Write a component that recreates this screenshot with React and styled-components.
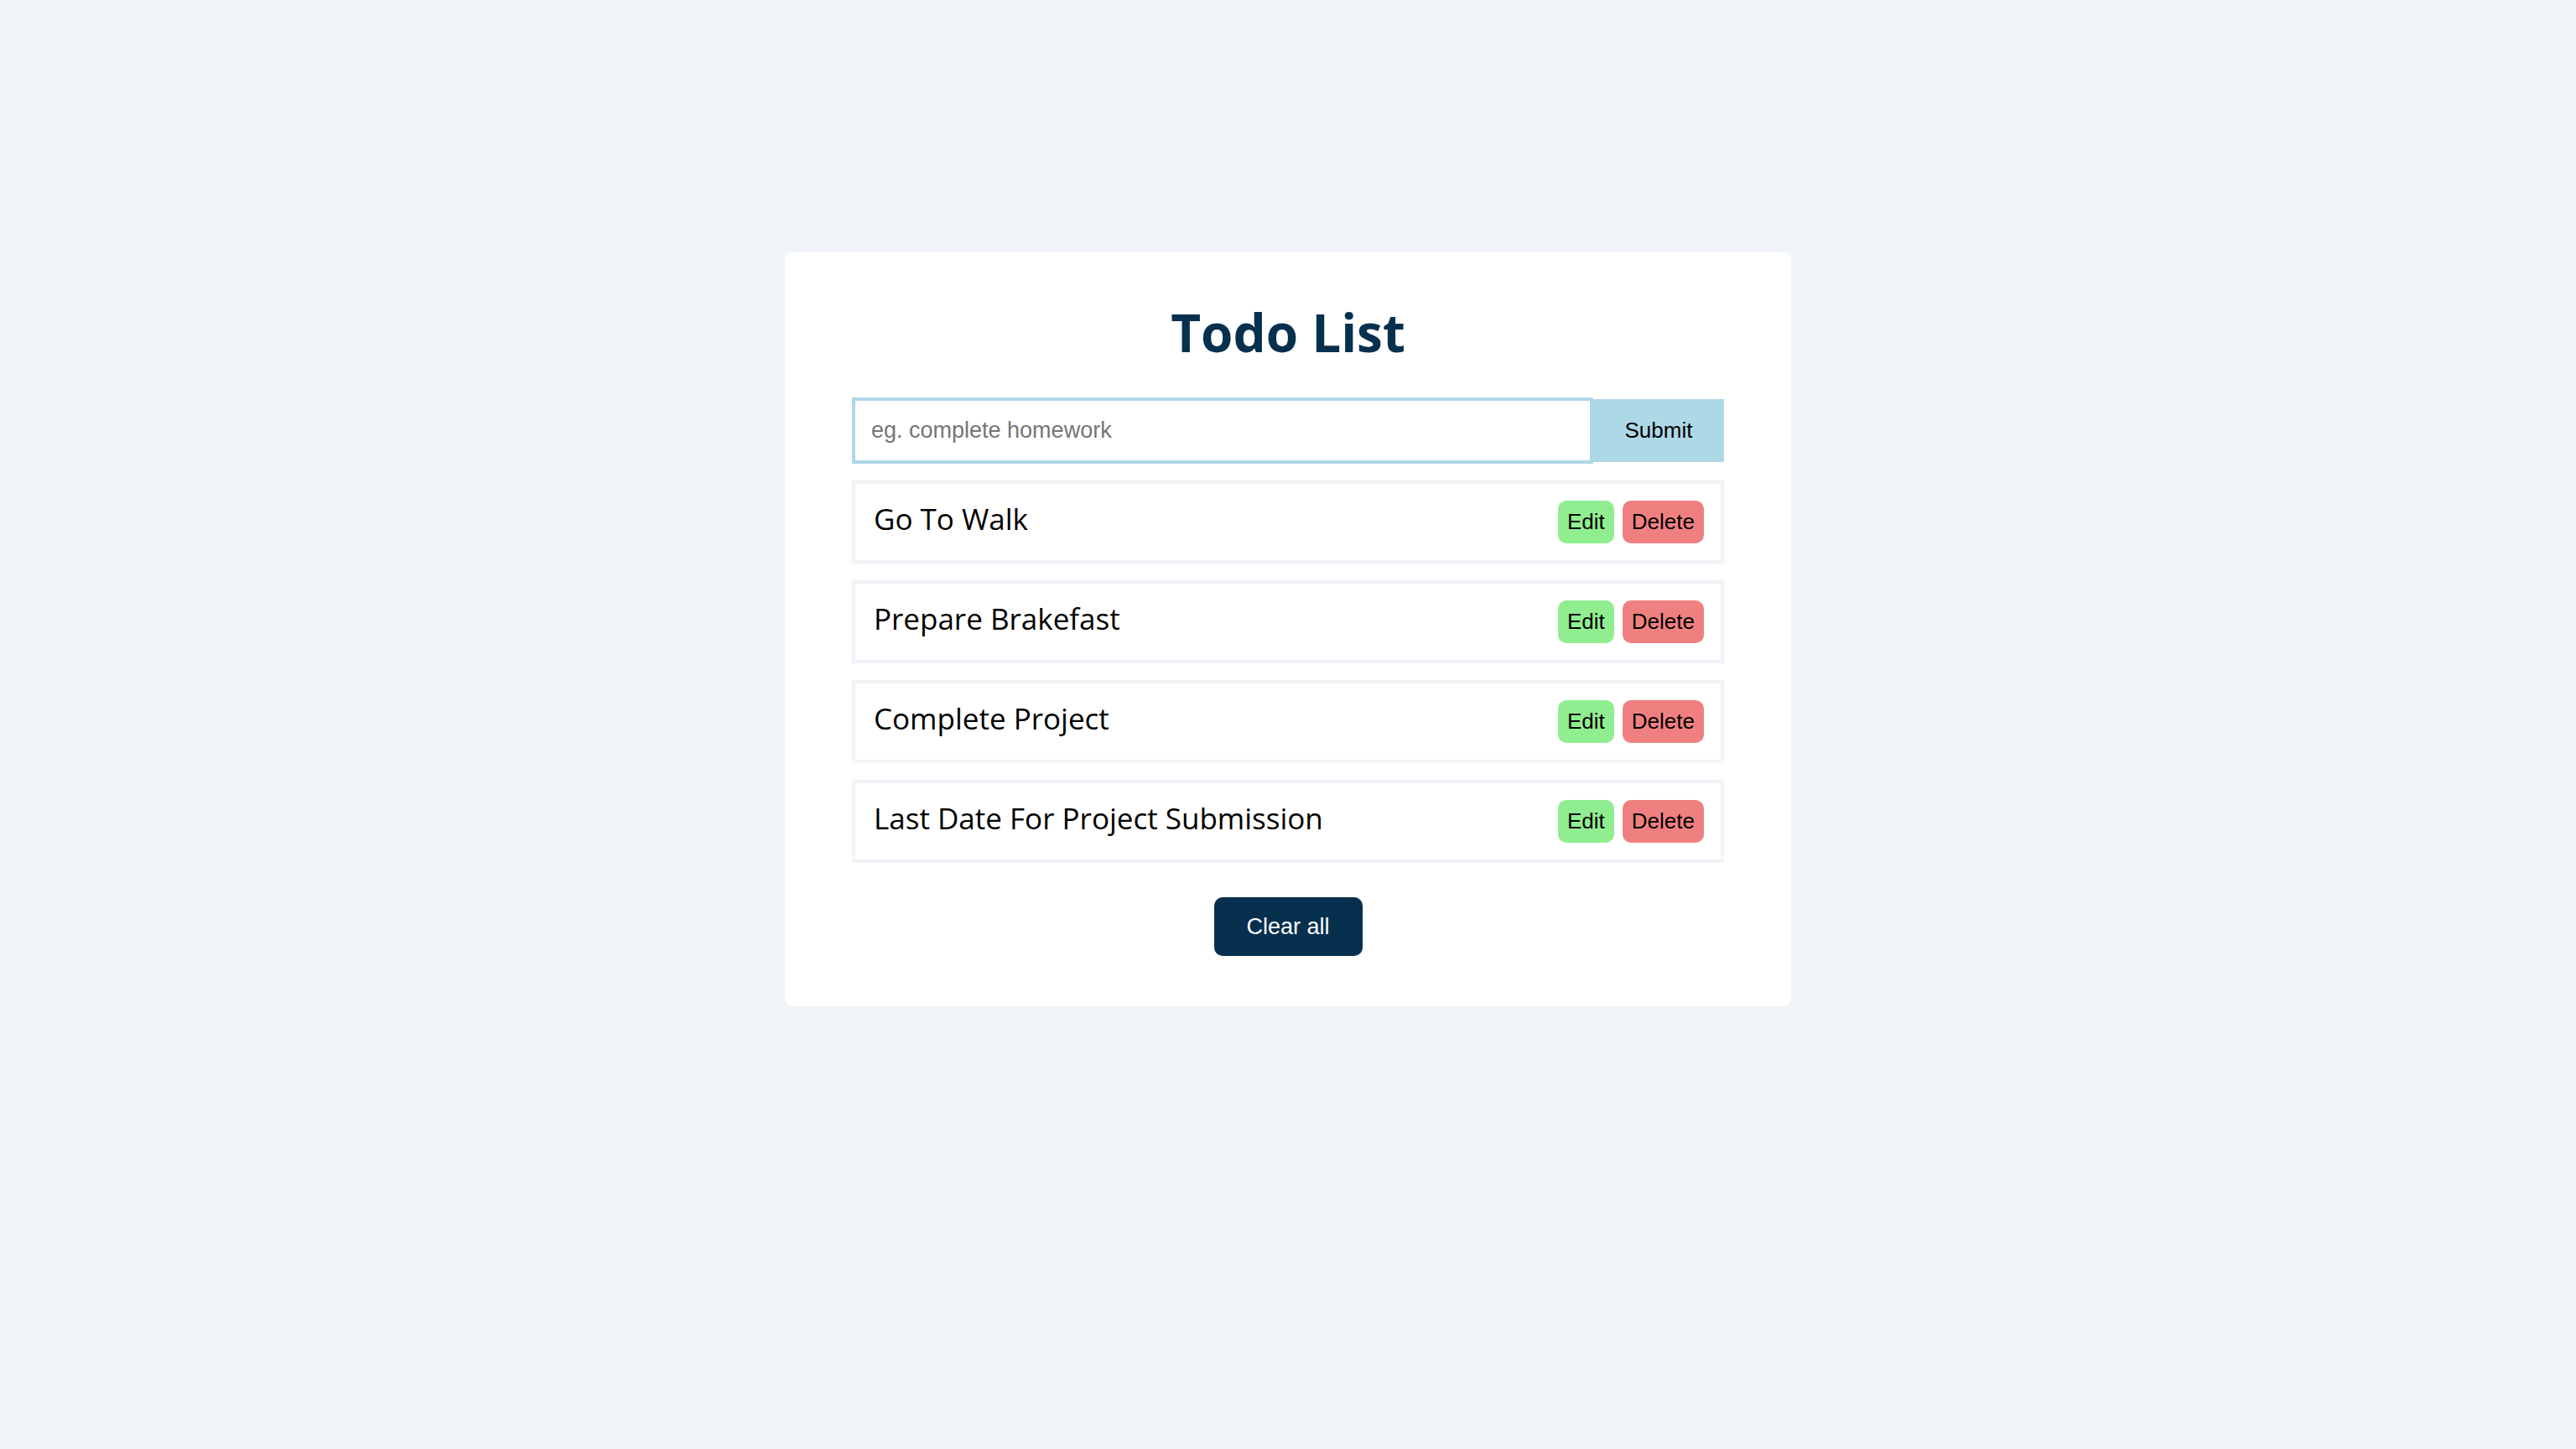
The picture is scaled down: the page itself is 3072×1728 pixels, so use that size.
import React, { useState } from 'react';
import styled, { createGlobalStyle } from 'styled-components';

const GlobalStyle = createGlobalStyle`
    * {
        box-sizing: border-box;
    }

    body {
        margin: 0;
        background: #f0f4f8;
        font-family: 'Liberation Sans', Arial, sans-serif;
    }
`;

const initialTodos = [
    'Go To Walk',
    'Prepare Brakefast',
    'Complete Project',
    'Last Date For Project Submission',
];

export default function App() {
    const [todos, setTodos] = useState(initialTodos);
    const [text, setText] = useState('');

    function handleSubmit(e) {
        e.preventDefault();
        if (!text.trim()) return;
        setTodos([...todos, text.trim()]);
        setText('');
    }

    return (
        <PageStyle>
            <GlobalStyle />
            <CardStyle>
                <TitleStyle>Todo List</TitleStyle>
                <FormStyle onSubmit={handleSubmit}>
                    <InputStyle
                        placeholder="eg. complete homework"
                        value={text}
                        onChange={(e) => setText(e.target.value)}
                    />
                    <SubmitStyle type="submit">Submit</SubmitStyle>
                </FormStyle>
                <ListStyle>
                    {todos.map((todo, i) => (
                        <ItemStyle key={i}>
                            <ItemText>{todo}</ItemText>
                            <ActionsStyle>
                                <ActionButton $color="#90ee90">Edit</ActionButton>
                                <ActionButton
                                    $color="#f08080"
                                    onClick={() => setTodos(todos.filter((_, j) => j !== i))}
                                >
                                    Delete
                                </ActionButton>
                            </ActionsStyle>
                        </ItemStyle>
                    ))}
                </ListStyle>
                <ClearStyle onClick={() => setTodos([])}>Clear all</ClearStyle>
            </CardStyle>
        </PageStyle>
    );
}

const PageStyle = styled.div`
    display: flex;
    justify-content: center;
    min-height: 100vh;
    padding-top: 300px;
`;

const CardStyle = styled.div`
    display: flex;
    flex-direction: column;
    align-items: center;
    width: 1200px;
    height: 900px;
    padding: 58px 80px 60px;
    background: #ffffff;
    border-radius: 10px;
`;

const TitleStyle = styled.h1`
    margin: 0 0 40px;
    font-family: 'Open Sans', sans-serif;
    font-size: 62px;
    line-height: 76px;
    font-weight: 700;
    color: #07304f;
`;

const FormStyle = styled.form`
    display: flex;
    align-items: center;
    width: 100%;
`;

const InputStyle = styled.input`
    flex: 1;
    height: 79px;
    padding: 0 19px;
    border: 4px solid #add8e6;
    outline: none;

    font-family: 'Liberation Sans', Arial, sans-serif;
    font-size: 27px;
    color: #000000;

    ::placeholder {
        color: #757575;
    }
`;

const SubmitStyle = styled.button`
    width: 156px;
    height: 75px;
    border: 0;
    background: #add8e6;

    font-family: 'Liberation Sans', Arial, sans-serif;
    font-size: 26px;
    color: #000000;
    cursor: pointer;
`;

const ListStyle = styled.ul`
    display: flex;
    flex-direction: column;
    gap: 20px;
    width: 100%;
    margin: 20px 0 0;
    padding: 0;
    list-style: none;
`;

const ItemStyle = styled.li`
    display: flex;
    justify-content: space-between;
    align-items: center;
    height: 99px;
    padding: 0 20px 0 22px;
    border: 4px solid #f0f4f8;
`;

const ItemText = styled.span`
    padding-bottom: 9px;
    font-family: 'Open Sans', sans-serif;
    font-size: 35px;
    color: #000000;
`;

const ActionsStyle = styled.div`
    display: flex;
    gap: 10px;
`;

const ActionButton = styled.button`
    height: 51px;
    padding: 0 11px;
    border: 0;
    border-radius: 10px;
    background: ${(p) => p.$color};

    font-family: 'Liberation Sans', Arial, sans-serif;
    font-size: 26px;
    color: #000000;
    cursor: pointer;
`;

const ClearStyle = styled.button`
    width: 177px;
    height: 71px;
    margin-top: 41px;
    border: 0;
    border-radius: 10px;
    background: #07304f;

    font-family: 'Liberation Sans', Arial, sans-serif;
    font-size: 27px;
    color: #ffffff;
    cursor: pointer;
`;
